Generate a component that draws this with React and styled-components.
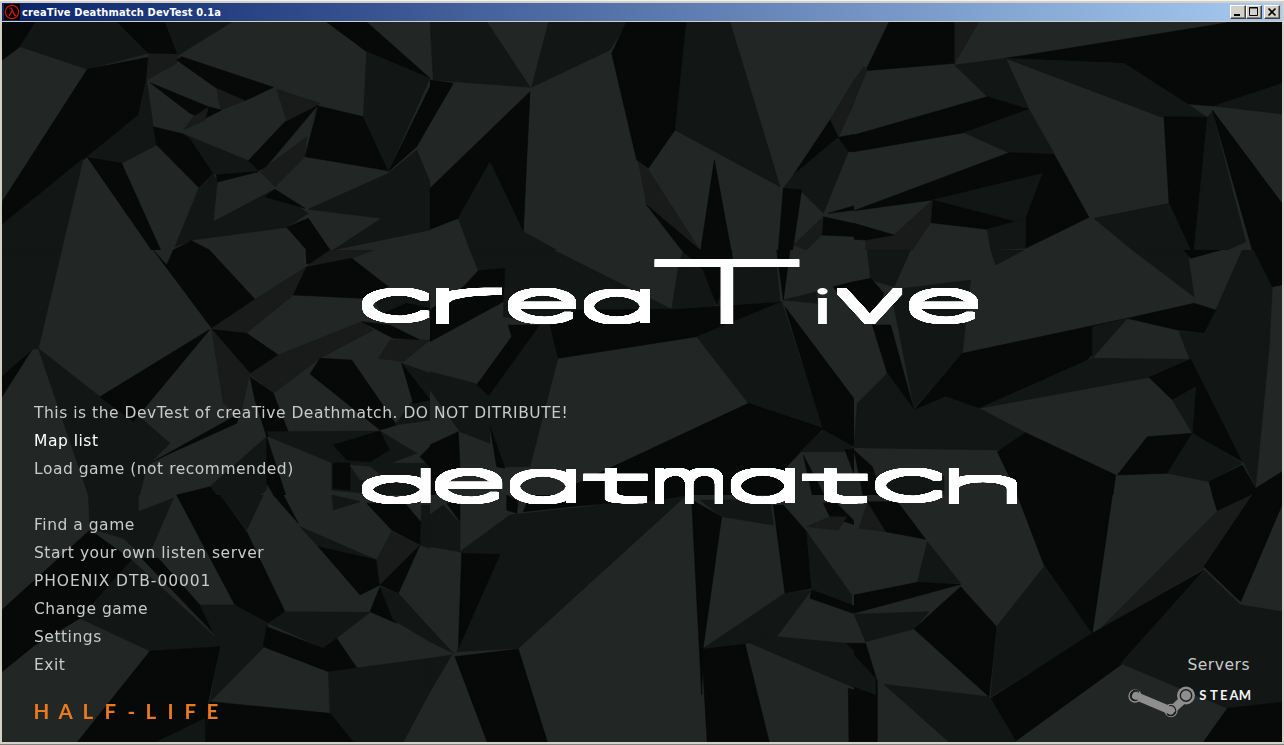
import React, { useMemo } from "react";
import styled, { createGlobalStyle } from "styled-components";

const GlobalStyle = createGlobalStyle`
  * { box-sizing: border-box; }
  body { margin: 0; background: #d4d0c8; overflow: hidden; }
`;

const Window = styled.div`
  width: 1284px;
  height: 745px;
  display: flex;
  flex-direction: column;
  padding: 1px 2px 2px;
  background: #d4d0c8;
  border-top: 1px solid #f4f2ec;
  border-bottom: 1px solid #808080;
`;

const TitleBar = styled.header`
  height: 18px;
  margin: 1px 0;
  flex: none;
  display: flex;
  align-items: center;
  padding: 0 2px;
  background: linear-gradient(90deg, #0a246a, #a6caf0);
`;

const Title = styled.h1`
  flex: 1;
  margin: 0 0 0 2px;
  color: #fff;
  font: bold 11px/17px "DejaVu Sans Condensed", "DejaVu Sans", sans-serif;
  font-stretch: condensed;
  letter-spacing: ${(p) => p.$tracking}px;
  white-space: pre;
`;

const WindowButtons = styled.div`
  display: flex;
  height: 14px;
`;

const WindowButton = styled.button`
  width: 16px;
  height: 14px;
  margin-left: ${(p) => (p.$apart ? 2 : 0)}px;
  padding: 0;
  border: 1px solid;
  border-color: #fff #404040 #404040 #fff;
  box-shadow: inset -1px -1px #808080;
  background: #d4d0c8;
  svg { display: block; }
`;

const Stage = styled.main`
  width: 1280px;
  height: 720px;
  display: grid;
  background: #222625;
  overflow: hidden;
  & > * { grid-area: 1 / 1; }
`;

const Layer = styled.svg`
  display: block;
  width: 1280px;
  height: 720px;
`;

const Side = styled.section`
  display: flex;
  flex-direction: column;
  justify-content: flex-end;
  justify-self: ${(p) => (p.$right ? "end" : "start")};
  align-items: ${(p) => (p.$right ? "flex-end" : "flex-start")};
  padding: 0 32px 0;
`;

const MenuList = styled.nav`
  display: flex;
  flex-direction: column;
`;

const MenuItem = styled.a`
  height: 28px;
  margin-top: ${(p) => (p.$gap ? 28 : 0)}px;
  color: ${(p) => (p.$active ? "#ffffff" : "#c8cbca")};
  font: 15.5px/28px "DejaVu Sans", Verdana, sans-serif;
  letter-spacing: ${(p) => p.$tracking || 0}px;
  white-space: nowrap;
`;

const Brand = styled.svg`
  display: block;
  height: 63px;
  overflow: visible;
`;

const L = "#222625";
const S = "#181b1a";
const M = "#121615";
const K = "#070908";

/* The faceted backdrop, in panels of 430 x 250, each drawn on a three times finer grid. */
const PANELS = [
  { x: 0, y: 0, facets: [
    [K, "0,60 110,60 60,140 0,185"],
    [M, "110,60 345,60 445,160 262,208 60,140"],
    [K, "345,60 493,60 532,162 445,160"],
    [M, "493,60 705,60 535,165"],
    [K, "262,208 445,172 438,240 415,345 262,470 0,680 0,615"],
    [S, "445,162 535,165 530,190 440,240"],
    [K, "530,180 545,170 820,262 735,302 650,265"],
    [S, "650,265 735,302 662,330"],
    [K, "450,248 625,320 665,330 610,358 570,340"],
    [S, "580,350 625,322 615,360 550,390"],
    [M, "440,240 460,380 470,435 365,490 262,470 415,345"],
    [K, "262,472 365,490 482,750 455,750"],
    [K, "460,380 550,402 570,415 640,520 597,563 470,435"],
    [M, "550,402 740,480 775,515 650,525 640,520 570,415"],
    [K, "650,525 775,515 650,547"],
    [K, "955,315 855,365 745,482 775,512 800,500 920,400"],
    [L, "950,322 920,410 800,500"],
    [S, "830,268 960,310 860,362"],
    [K, "955,318 1090,350 1165,512 915,470"],
    [S, "920,410 915,470 825,560 780,515"],
    [M, "597,563 640,520 652,545 640,665 575,722 525,740"],
    [M, "640,665 820,570 925,640 860,682 575,720"],
    [K, "795,590 825,568 915,625"],
    [K, "860,682 925,655 990,750 920,750"],
    [M, "925,628 1165,520 1250,450 1290,545 1290,690 1000,750 1145,655"],
    [K, "980,66 1100,66 1290,235 1100,155"],
    [M, "1100,155 1290,235 1165,512 1090,350"],
    [K, "1290,260 1290,370 1250,440 1165,515"],
    [M, "250,475 185,750 0,750 0,678"],
    [K, "575,722 628,750 520,750"],
  ] },
  { x: 430, y: 0, facets: [
    [M, "0,60 167,60 300,262 10,240"],
    [K, "0,240 70,250 0,370"],
    [M, "357,60 595,60 540,150 305,262"],
    [K, "592,60 770,60 760,250 735,390 655,505 620,480 545,160"],
    [M, "770,60 898,60 1050,560 735,390"],
    [K, "300,275 280,695 180,485 85,655 0,688 0,565"],
    [M, "180,485 280,695 380,750 120,750 85,655"],
    [S, "625,485 655,510 810,750 770,740 650,615"],
    [K, "650,615 810,750 755,750"],
    [K, "853,480 903,750 812,750"],
    [S, "1290,210 1200,360 1225,412 1290,270"],
    [K, "1200,360 1225,412 1090,525"],
    [M, "1225,412 1255,455 1180,640 1115,575 1060,565 1090,525"],
    [K, "1225,412 1290,400 1290,455 1255,455"],
    [K, "1060,565 1115,570 1088,750 1045,750"],
    [K, "1180,650 1290,675 1290,710 1175,705"],
    [S, "1180,650 1175,705 1130,750 1090,735"],
    [K, "1195,640 1290,612 1290,628"],
  ] },
  { x: 854, y: 0, facets: [
    [K, "108,60 302,60 302,190 35,212"],
    [S, "302,60 378,60 302,190"],
    [S, "40,208 0,305 0,240 30,200"],
    [M, "302,195 455,175 525,328 400,290"],
    [K, "1110,70 1150,60 1284,60 1284,250 1080,318 1000,312 810,190 455,175"],
    [M, "455,175 810,190 1000,312 1060,352 920,350"],
    [M, "1080,318 1284,250 1284,342"],
    [K, "0,405 400,290 525,328 330,398 0,455"],
    [M, "330,398 525,328 600,460 465,458"],
    [K, "465,458 600,462 705,652 515,745 515,650 565,520 235,600 0,632"],
    [M, "235,600 565,520 515,650 495,668"],
    [K, "235,600 495,668 400,688 230,668"],
    [S, "235,600 230,668 175,750 35,750 35,720 120,705"],
    [K, "0,670 120,705 35,720 0,718"],
    [M, "400,688 515,655 515,745 410,750"],
    [K, "930,350 1060,352 1020,750 1010,750 945,610"],
    [M, "1060,352 1075,335 1175,725 1120,750 1020,750"],
    [M, "720,655 945,610 1010,750 835,750"],
    [K, "1075,330 1284,610 1284,750 1195,750"],
  ] },
  { x: 0, y: 250, facets: [
    [M, "0,0 185,0 115,295 90,300 0,385"],
    [K, "0,385 95,300 0,450"],
    [K, "460,0 500,45 520,0 628,0 765,148 635,235"],
    [S, "765,148 920,50 880,135 740,248 635,235"],
    [K, "918,0 990,0 960,35 920,42"],
    [S, "925,45 990,0 1120,0 1055,25"],
    [K, "920,50 1055,25 1165,110 1085,145 880,135"],
    [M, "115,295 300,440 430,510 510,580 440,650 415,750 270,750"],
    [K, "630,238 300,440 400,515"],
    [K, "740,250 635,238 750,370 835,315"],
    [S, "635,238 750,370 720,500 670,460"],
    [S, "750,372 835,315 1085,215 1120,240 960,325 820,430"],
    [K, "750,380 820,430 865,545 800,560 765,450"],
    [K, "960,325 1055,330 1190,525 1140,540 930,372"],
    [M, "1205,340 1290,370 1290,510 1185,525 1240,450"],
    [K, "1205,340 1290,450 1240,460"],
    [M, "800,545 1140,543 1250,610 1170,640 1000,640 810,562"],
    [K, "1000,585 1140,543 1168,600 1110,635 1040,630"],
    [K, "450,640 720,490 710,520 500,615"],
    [M, "630,710 800,560 800,720 760,750 660,750"],
    [K, "800,560 862,750 830,750 800,700"],
    [K, "530,735 630,710 660,750 530,750"],
    [M, "995,640 1290,640 1290,750 995,720"],
    [K, "1000,640 1050,640 1050,720 1000,715"],
    [L, "1050,645 1110,650 1160,690 1080,690"],
    [M, "1115,136 1290,136 1290,198 1150,198"],
    [K, "1150,190 1220,160 1290,175 1220,198"],
    [K, "1085,215 1170,225 1260,270 1180,265"],
    [S, "1170,270 1290,270 1210,335 1135,325"],
    [K, "1260,620 1290,590 1290,650"],
  ] },
  { x: 430, y: 250, facets: [
    [M, "120,0 370,0 725,178 380,225 220,200 225,55 145,62"],
    [K, "100,110 145,62 225,55 220,155 0,275 0,180"],
    [K, "245,260 235,225 330,225 175,440 140,405"],
    [M, "330,225 360,225 385,320 300,650 215,650 180,530 175,440"],
    [K, "360,225 440,180 720,178 1055,155 800,260 385,325"],
    [M, "725,178 745,50 760,0 820,0 855,168"],
    [K, "755,0 905,0 910,60 860,165 820,60"],
    [M, "905,55 1040,50 1050,155 860,165"],
    [K, "1040,0 1080,0 1060,150"],
    [M, "1055,155 1180,540 955,460 800,260"],
    [K, "1065,170 1290,470 1270,590 1180,540"],
    [K, "955,460 1180,535 1070,650 1060,750 420,750 410,715"],
    [M, "0,365 135,400 178,440 180,580 90,545 0,420"],
    [K, "0,585 85,545 90,650 0,750"],
    [K, "180,530 225,655 200,650"],
    [M, "1180,540 1270,590 1240,605 1110,605"],
    [K, "1120,615 1190,750 1150,750"],
    [K, "1245,600 1270,595 1290,630 1290,720"],
    [K, "1210,110 1290,90 1290,160 1240,150"],
    [M, "1060,150 1160,125 1160,160"],
  ] },
  { x: 854, y: 250, facets: [
    [M, "40,0 170,0 120,110 50,90"],
    [K, "0,95 50,85 90,130 60,200 0,150"],
    [M, "110,120 350,90 325,310 180,475"],
    [K, "55,225 110,225 180,480 100,370"],
    [M, "410,0 510,0 425,45"],
    [K, "325,310 820,205 700,330 375,475 275,440 180,480"],
    [M, "715,230 820,205 715,325"],
    [M, "835,0 1000,0 1020,140"],
    [K, "990,0 1100,0 1010,25"],
    [M, "1165,0 1200,0 1255,110 1245,300 1205,710 1170,640 1010,335 975,245 1050,248 1085,180"],
    [K, "820,205 1020,160 1085,180 1050,248 970,240"],
    [K, "1200,0 1284,0 1284,105 1255,110"],
    [M, "715,325 1010,328 885,382 375,475"],
    [K, "885,382 1010,328 1165,635 1015,550 1025,410 955,450"],
    [M, "955,450 1025,410 1015,550"],
    [K, "880,560 1015,550 940,670 790,675"],
    [M, "1015,550 1165,640 1065,695 940,670"],
    [K, "1065,695 1165,645 1205,715 1284,665 1284,750 1080,750"],
    [M, "100,370 180,480 275,440 375,475 515,548 435,600 0,593 10,460"],
    [K, "515,548 785,675 775,750 500,750 430,605"],
    [K, "0,600 55,650 90,750 30,750"],
    [M, "90,680 270,680 270,740 110,730"],
  ] },
  { x: 0, y: 495, facets: [
    [M, "265,0 415,0 415,50 520,10 440,195 370,130 270,100"],
    [K, "270,105 395,195 240,370 105,450 0,535 0,350"],
    [M, "395,195 650,430 660,455 450,468 240,370"],
    [K, "425,190 475,190 600,330 655,430"],
    [K, "530,0 660,0 740,110 855,350 805,385 705,330"],
    [M, "660,0 790,0 740,105"],
    [K, "820,0 850,0 895,85"],
    [M, "600,330 705,330 805,385 790,458 630,620 660,455"],
    [M, "805,385 855,350 1110,352 1010,430 970,460"],
    [K, "800,395 970,460 1010,430 1075,525 985,530 790,455"],
    [M, "900,95 1130,195 955,155"],
    [K, "955,155 1130,195 1140,270 1080,300"],
    [K, "1100,25 1215,25 1270,90 1260,150 1175,105"],
    [S, "1175,110 1260,150 1140,270 1130,195"],
    [K, "1260,150 1195,295 1140,270"],
    [K, "1140,275 1190,385 1110,350"],
    [M, "1140,275 1195,295 1290,400 1290,440 1180,375"],
    [M, "985,530 1290,490 1290,590 1205,750 1065,750 990,655"],
    [K, "630,620 990,655 1067,750 615,750"],
    [K, "450,468 660,455 625,620 615,750 225,750"],
    [M, "450,750 615,670 615,750"],
    [M, "995,0 1080,20 1000,45"],
    [M, "1265,30 1290,30 1290,160 1260,150"],
  ] },
  { x: 430, y: 495, facets: [
    [M, "90,170 240,60 700,10 770,0 265,460 80,470 210,178 95,175"],
    [K, "280,50 300,0 770,0 690,14 450,32"],
    [K, "230,0 265,20 260,55 230,45"],
    [M, "0,60 40,30 90,85 90,170 0,155"],
    [K, "50,25 90,25 90,80"],
    [K, "95,175 210,178 85,460"],
    [K, "75,485 265,462 355,750 175,750"],
    [M, "0,400 70,475 0,440"],
    [M, "0,490 65,480 0,590"],
    [K, "785,15 875,65 820,455 815,600"],
    [M, "810,15 1020,15 1030,90 875,65"],
    [K, "1030,30 1060,30 1130,110 1145,280 1065,295"],
    [M, "1130,110 1265,300 1265,350 1145,285"],
    [K, "1145,285 1280,335 1270,355 1140,310"],
    [M, "820,460 1065,295 1145,285 1040,425 950,445"],
    [K, "815,462 945,447 1020,750 832,750"],
    [M, "950,440 1040,425 1250,445 1290,490 1290,585"],
    [K, "1250,445 1290,445 1290,485"],
    [K, "1255,580 1290,590 1290,750 1257,750"],
    [K, "1180,25 1220,25 1290,95 1200,65"],
    [S, "1130,95 1200,65 1250,65 1225,105"],
  ] },
  { x: 854, y: 495, facets: [
    [K, "40,20 130,20 215,133 95,110"],
    [S, "40,25 95,110 15,100"],
    [M, "220,140 320,265 190,262"],
    [K, "0,300 190,262 320,268 0,355"],
    [L, "10,355 310,275 225,350"],
    [M, "0,358 225,350 180,402 35,440"],
    [K, "320,275 428,395 405,605 180,402"],
    [M, "570,215 715,415 410,605 428,395"],
    [K, "490,0 775,0 715,415 570,210"],
    [K, "1075,0 1190,0 1090,48"],
    [S, "1090,48 1195,0 1050,220 740,400"],
    [K, "1050,225 715,415 410,610 485,738 800,510"],
    [K, "1195,0 1284,0 1284,30 1160,320 1050,215"],
    [M, "1050,225 1160,330 1284,350 1284,622 1120,640 800,505"],
    [K, "1120,640 1284,622 1284,750 1042,750"],
    [M, "90,568 405,605 485,738 470,750 295,750"],
    [K, "0,445 35,445 70,560 70,750 0,750"],
    [M, "0,480 65,550 65,600 0,575"],
  ] },
];

function Backdrop() {
  return (
    <Layer viewBox="2 22 1280 720" aria-hidden="true">
      {PANELS.map((p) => (
        <svg key={`${p.x}-${p.y}`} x={p.x} y={p.y} width="430" height="250" viewBox="0 0 1290 750">
          <rect width="1290" height="750" fill={L} />
          {p.facets.map(([fill, points], i) => (
            <polygon key={i} fill={fill} stroke={fill} strokeWidth="1.5" points={points} />
          ))}
        </svg>
      ))}
    </Layer>
  );
}

/* Each letter with the box that its ink fills: left, right, top, bottom. */
const WORDMARK = [
  ["c", 362, 430, 288, 324], ["r", 434, 503, 288, 324], ["e", 508, 577, 288, 324],
  ["a", 582, 642, 288, 324], ["T", 654, 801, 259, 324],
  ["v", 836, 903, 288, 324], ["e", 909, 979, 288, 324],
  ["d", 362, 431, 468, 504], ["e", 435, 503, 468, 504], ["a", 508, 568, 468, 504],
  ["t", 582, 650, 468, 504], ["m", 655, 723, 468, 504], ["a", 729, 787, 468, 504],
  ["t", 801, 870, 468, 504], ["c", 875, 943, 468, 504], ["h", 948, 1017, 468, 504],
];

const DOTTED = [["i", 817, 828, 288, 324]];

/* How far the thin letters are thickened, with square corners, on every side. */
const THICKEN = 3;
const THIN = 100;
const BOLD = 600;
const letterFont = (weight) => `${weight} 100px Inter, "Liberation Sans", sans-serif`;

const Letter = styled.text`
  font: ${(p) => letterFont(p.$weight)};
  font-feature-settings: "cv11";
  fill: #fff;
`;

function place(list, weight, inset) {
  const ctx = document.createElement("canvas").getContext("2d");
  ctx.font = letterFont(weight);
  return list.map(([ch, l, r, t, b]) => {
    const m = ctx.measureText(ch);
    const sx = (r - l - 2 * inset) / (m.actualBoundingBoxLeft + m.actualBoundingBoxRight);
    const sy = (b - t - 2 * inset) / (m.actualBoundingBoxAscent + m.actualBoundingBoxDescent);
    const x = l + inset + m.actualBoundingBoxLeft * sx;
    const y = b - inset - m.actualBoundingBoxDescent * sy;
    return { ch, weight, transform: `translate(${x} ${y}) scale(${sx} ${sy})` };
  });
}

function Letters({ items }) {
  return items.map((l, i) => (
    <Letter key={i} $weight={l.weight} transform={l.transform}>{l.ch}</Letter>
  ));
}

function Wordmark() {
  const thin = useMemo(() => place(WORDMARK, THIN, THICKEN), []);
  const dotted = useMemo(() => place(DOTTED, BOLD, 0), []);
  return (
    <Layer viewBox="2 22 1280 720">
      <filter id="thicken" filterUnits="userSpaceOnUse" x="340" y="240" width="700" height="280">
        <feComponentTransfer>
          <feFuncA type="linear" slope="3" intercept="-0.15" />
        </feComponentTransfer>
        <feMorphology operator="dilate" radius={THICKEN} />
      </filter>
      <g filter="url(#thicken)">
        <Letters items={thin} />
      </g>
      <Letters items={dotted} />
    </Layer>
  );
}

const HalfLifeText = styled.text`
  font: 700 20.5px Lato, sans-serif;
  fill: #ea7a1f;
`;

const SteamText = styled.text`
  font: 700 13px Lato, sans-serif;
  fill: #f4f4f4;
`;

function LambdaIcon() {
  return (
    <svg width="16" height="16" viewBox="0 0 16 16">
      <rect width="16" height="16" fill="#000" />
      <circle cx="8" cy="8" r="6.7" fill="none" stroke="#d3120e" strokeWidth="1.2" />
      <path d="M5.5 4.2h1.8l3.4 7.3h1.5M8 6.8l-3 5" fill="none" stroke="#d3120e" strokeWidth="1.3" />
    </svg>
  );
}

function SteamLogo() {
  return (
    <Brand width="124" viewBox="1126 679 124 63">
      <g fill="none" stroke="#8e8e8e">
        <circle cx="1135" cy="696" r="6" strokeWidth="1.3" />
        <circle cx="1171" cy="710.5" r="6" strokeWidth="1.3" />
        <path d="M1136 696l34.5 14.5" strokeWidth="8" strokeLinecap="round" />
        <path d="M1172.5 709.5l11-10" strokeWidth="8" />
      </g>
      <circle cx="1186" cy="695.5" r="9" fill="#8e8e8e" />
      <circle cx="1186" cy="695.5" r="5.7" fill="#8e8e8e" stroke="#1a1d1c" strokeWidth="1.4" />
      <path d="M1139 691.5a5 5 0 1 0-1.5 8.5M1167 714a5 5 0 1 0 2.2-8.2" fill="none" stroke="#1a1d1c" strokeWidth="1.1" />
      <SteamText x="1199.3 1210 1220 1229.6 1238.8" y="700">STEAM</SteamText>
    </Brand>
  );
}

const MENU = [
  { label: "This is the DevTest of creaTive Deathmatch. DO NOT DITRIBUTE!" },
  { label: "Map list", active: true },
  { label: "Load game (not recommended)" },
  { label: "Find a game", gap: true },
  { label: "Start your own listen server" },
  { label: "PHOENIX DTB-00001", tracking: 0.92 },
  { label: "Change game" },
  { label: "Settings" },
  { label: "Exit" },
];

export default function App() {
  return (
    <>
      <GlobalStyle />
      <Window>
        <TitleBar>
          <LambdaIcon />
          <Title $tracking={0.16}>creaTive Deathmatch DevTest 0.1a</Title>
          <WindowButtons>
            <WindowButton aria-label="Minimize">
              <svg width="14" height="12"><path d="M3 9h6" stroke="#000" strokeWidth="2" /></svg>
            </WindowButton>
            <WindowButton aria-label="Maximize">
              <svg width="14" height="12"><path d="M2.5 1.5h8v8h-8zM2 2h9" fill="none" stroke="#000" /></svg>
            </WindowButton>
            <WindowButton aria-label="Close" $apart>
              <svg width="14" height="12"><path d="M3.5 2.5l7 7M10.5 2.5l-7 7" stroke="#000" strokeWidth="1.6" /></svg>
            </WindowButton>
          </WindowButtons>
        </TitleBar>
        <Stage>
          <Backdrop />
          <Wordmark />
          <Side>
            <MenuList>
              {MENU.map((m) => (
                <MenuItem key={m.label} $active={m.active} $gap={m.gap} $tracking={m.tracking || 0.52}>{m.label}</MenuItem>
              ))}
            </MenuList>
            <Brand width="190" viewBox="34 679 190 63">
              <HalfLifeText x="33.5 58.5 82.5 104.5 127.5 145.5 167.5 184.5 206.5" y="719">HALF-LIFE</HalfLifeText>
            </Brand>
          </Side>
          <Side $right>
            <MenuItem $tracking={0.52}>Servers</MenuItem>
            <SteamLogo />
          </Side>
        </Stage>
      </Window>
    </>
  );
}
